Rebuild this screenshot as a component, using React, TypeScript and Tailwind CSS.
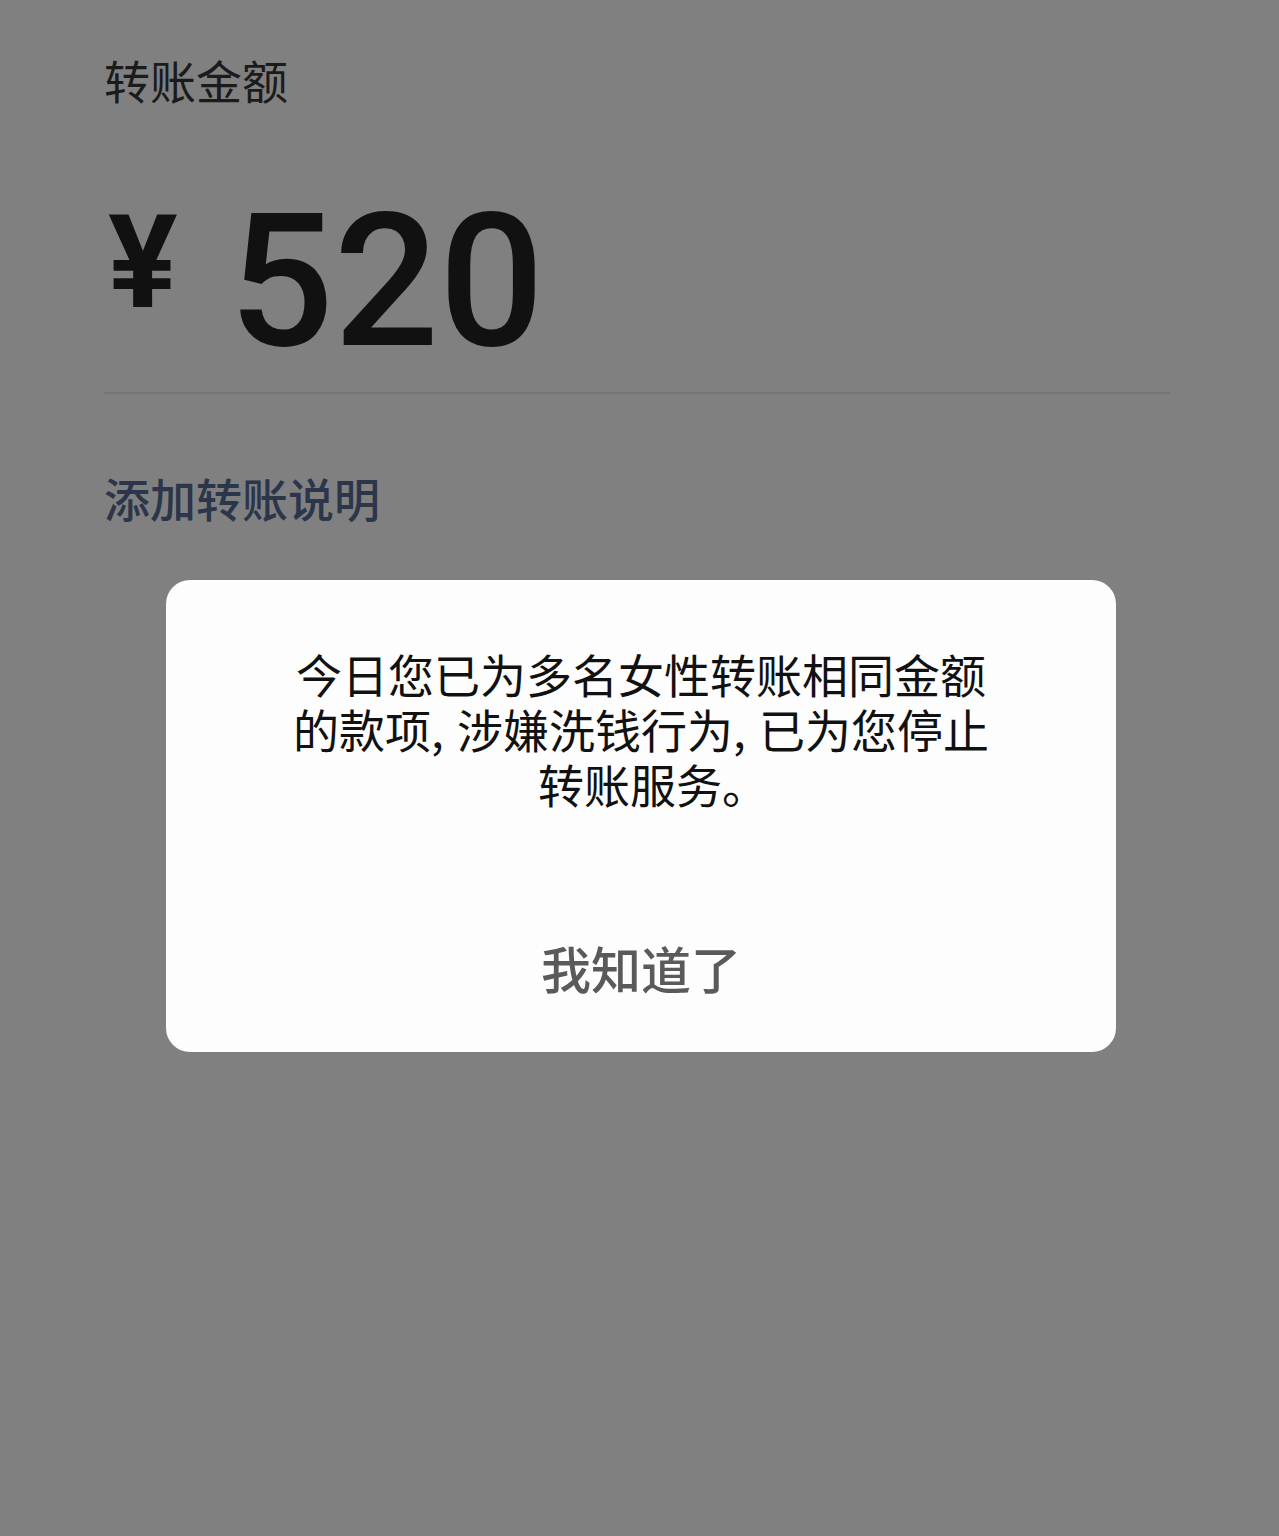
const cjk = "font-['Noto_Sans_CJK_SC','Noto_Sans',sans-serif]"

// Blocking notice shown on top of the transfer form
const NoticeDialog = () => {
  return (
    <div className="absolute inset-x-0 top-[580px] flex justify-center pl-[3px]">
      <div className="w-[950px] rounded-[24px] bg-[#fdfdfd] pt-[66px] pb-[57px] text-center">
        <div className={`${cjk} text-[46px] leading-[55px] text-[#111]`}>
          <div>今日您已为多名女性转账相同金额</div>
          <div>
            的款项<span className="inline-block w-[26px] text-left">,</span>
            涉嫌洗钱行为<span className="inline-block w-[26px] text-left">,</span>
            已为您停止
          </div>
          <div className="pl-[24px]">转账服务。</div>
        </div>
        <button
          className={`${cjk} mt-[131px] text-[50px] leading-[50px] font-medium text-[#5a5a5a]`}
        >
          我知道了
        </button>
      </div>
    </div>
  )
}

const App = () => {
  return (
    <div className="relative h-[1536px] w-full overflow-hidden bg-[#808080]">
      <div className="pl-[104px] pr-[109px]">
        <div className={`${cjk} pt-[56px] text-[46px] leading-[46px] text-[#1b1b1b]`}>
          转账金额
        </div>

        {/* amount */}
        <div className="mt-[87px] flex items-start font-['Roboto','Liberation_Sans',sans-serif] text-[#111]">
          <span className="mt-[9px] ml-[4px] text-[130px] leading-[130px] font-bold">¥</span>
          <span className="ml-[51px] text-[185px] leading-[185px] font-medium">520</span>
        </div>

        <div className="mt-[18px] h-[2px] bg-[#747474]" />

        <div className={`${cjk} mt-[80px] text-[46px] leading-[46px] font-medium text-[#2c364a]`}>
          添加转账说明
        </div>
      </div>

      <NoticeDialog />
    </div>
  )
}

export default App
